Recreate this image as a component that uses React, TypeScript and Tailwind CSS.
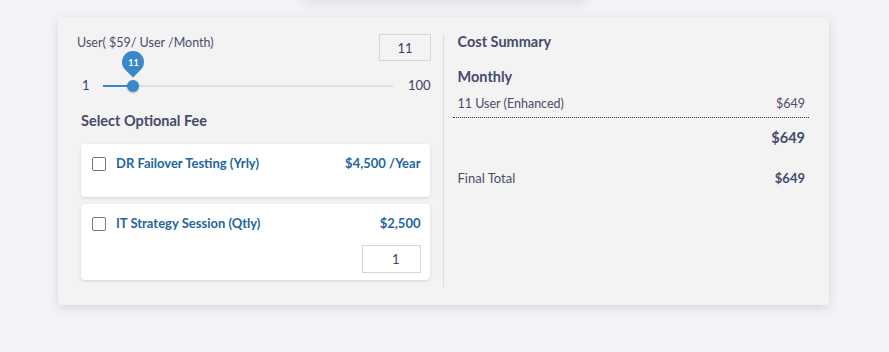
import { useState } from 'react'

interface OptionalFee {
  id: string
  label: string
  price: string
  withQty?: boolean
}

const FEES: OptionalFee[] = [
  { id: 'dr', label: 'DR Failover Testing (Yrly)', price: '$4,500 /Year' },
  { id: 'it', label: 'IT Strategy Session (Qtly)', price: '$2,500', withQty: true },
]

function Checkbox({ checked, onToggle }: { checked: boolean; onToggle: () => void }) {
  return (
    <button
      type="button"
      onClick={onToggle}
      className={`w-[14px] h-[14px] shrink-0 rounded-[2px] border ${
        checked ? 'bg-[#3b87cc] border-[#3b87cc]' : 'bg-white border-[#767676]'
      }`}
    />
  )
}

export default function App() {
  const [users] = useState(11)
  const [checked, setChecked] = useState<Record<string, boolean>>({})

  return (
    <div className="min-h-[352px] bg-[#f4f3f8] font-['Lato',sans-serif] text-[12.5px] text-[#4a4d69] overflow-hidden">
      {/* bottom edge of the panel above */}
      <div className="mx-auto w-[278px] h-px -mt-px shadow-[0_0_12px_3px_rgba(0,0,0,0.13)]" />

      <div className="ml-[58px] mt-[17px] w-[771px] rounded-[4px] bg-[#f3f3f3] shadow-[0_3px_12px_rgba(0,0,0,0.12)] px-5 pt-[17px] pb-[18px] grid grid-cols-2">
        {/* Left: users + optional fees */}
        <div className="border-r border-[#dddddd] pr-3 pb-[7px]">
          <div className="flex items-start justify-between">
            <span className="leading-[16px] mt-[1px] -ml-px">User( $59/ User /Month)</span>
            <input
              readOnly
              value={users}
              className="w-[52px] h-[27px] border border-[#d6d6d6] bg-transparent text-right pr-[17px] text-[13px] text-[#3d4160] outline-none"
            />
          </div>

          {/* Slider */}
          <div className="flex items-center h-4 mt-[17px] text-[13px] text-[#3d4160]">
            <span className="w-[25px] pl-[4px]">1</span>
            <div className="relative flex-1 h-[2px] bg-[#dedede]">
              <div className="absolute left-0 top-0 h-[2px] w-[30px] bg-[#3b87cc]" />
              <div className="absolute left-[24px] -top-[5px] w-3 h-3 rounded-full bg-[#3b87cc] shadow-[0_1px_2px_rgba(0,0,0,0.25)]" />
              <div className="absolute left-[19px] -top-[34px] w-[22px] h-[22px] rounded-[50%_50%_50%_0] -rotate-45 bg-[#3b87cc] flex items-center justify-center">
                <span className="rotate-45 text-white text-[9px] font-bold leading-none">{users}</span>
              </div>
            </div>
            <span className="w-[38px] text-right">100</span>
          </div>

          <div className="ml-[3px] mr-px">
            <h3 className="mt-[17px] text-[14.5px] leading-[20px] font-bold text-[#464a6b]">Select Optional Fee</h3>

            <div className="mt-[13px] flex flex-col gap-[7px]">
              {FEES.map((fee) => (
                <div
                  key={fee.id}
                  className={`bg-white rounded-[4px] shadow-[0_1px_3px_rgba(0,0,0,0.14)] pl-[11px] pr-[9px] pt-3 ${
                    fee.withQty ? 'pb-[7px]' : 'h-[53px]'
                  }`}
                >
                  <div className="flex items-center h-4 text-[13px]">
                    <Checkbox
                      checked={!!checked[fee.id]}
                      onToggle={() => setChecked({ ...checked, [fee.id]: !checked[fee.id] })}
                    />
                    <span className="ml-[10px] font-bold text-[#22669f]">{fee.label}</span>
                    <span className="ml-auto font-bold text-[#22669f]">{fee.price}</span>
                  </div>
                  {fee.withQty && (
                    <div className="flex justify-end mt-[13px]">
                      <input
                        readOnly
                        value={1}
                        className="w-[59px] h-[28px] border border-[#d6d6d6] bg-white text-right pr-[20px] text-[13px] text-[#3d4160] outline-none"
                      />
                    </div>
                  )}
                </div>
              ))}
            </div>
          </div>
        </div>

        {/* Right: cost summary */}
        <div className="pl-[9px] -mt-px">
          <h3 className="pl-[5px] text-[14.5px] leading-[18px] font-bold text-[#464a6b]">Cost Summary</h3>
          <h4 className="pl-[5px] mt-[16px] text-[14.5px] leading-[20px] font-bold text-[#464a6b]">Monthly</h4>
          <div className="mt-[9px] pb-[5px] pl-[5px] pr-[4px] flex justify-between leading-[16px] border-b border-dotted border-[#333333]">
            <span>11 User (Enhanced)</span>
            <span>$649</span>
          </div>
          <div className="mt-[10px] pr-[4px] text-right text-[14.5px] leading-[20px] font-bold text-[#464a6b]">$649</div>
          <div className="mt-[22px] pl-[5px] pr-[4px] flex justify-between leading-[16px] text-[13px]">
            <span>Final Total</span>
            <span className="font-bold text-[#464a6b]">$649</span>
          </div>
        </div>
      </div>
    </div>
  )
}
